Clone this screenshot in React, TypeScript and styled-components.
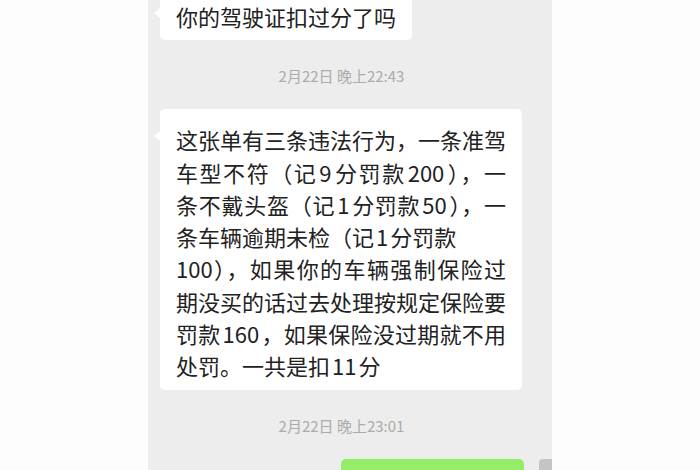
import React from "react";
import styled, { createGlobalStyle } from "styled-components";

const GlobalStyle = createGlobalStyle`
  html, body {
    margin: 0;
    padding: 0;
    background: #fdfdfd;
  }
  body {
    font-family: "Noto Sans CJK SC", "Noto Sans", sans-serif;
  }
`;

const Page = styled.div`
  width: 700px;
  height: 470px;
  display: flex;
  justify-content: center;
  background: #fdfdfd;
`;

const Panel = styled.main`
  width: 404px;
  height: 470px;
  background: #ededed;
  overflow: hidden;
`;

const Thread = styled.div`
  display: flex;
  flex-direction: column;
  margin-top: -14px;
  padding: 0 12px;
`;

const Row = styled.div<{ $out?: boolean }>`
  display: flex;
  justify-content: ${(p) => (p.$out ? "flex-end" : "flex-start")};
  align-items: flex-start;
  gap: 15px;
  margin-right: ${(p) => (p.$out ? "-39px" : "0")};
`;

const Bubble = styled.div<{ $out?: boolean; $width?: number }>`
  position: relative;
  box-sizing: border-box;
  width: ${(p) => (p.$width ? `${p.$width}px` : "auto")};
  min-height: 54px;
  background: ${(p) => (p.$out ? "#95ec69" : "#ffffff")};
  color: #222222;
  border-radius: 5px;
  padding: 14px 16px 8px;
  font-size: 22px;
  line-height: 32.3px;
  &::before {
    content: "";
    position: absolute;
    top: 22px;
    ${(p) => (p.$out ? "right: -6px;" : "left: -6px;")}
    border-top: 5px solid transparent;
    border-bottom: 5px solid transparent;
    ${(p) =>
      p.$out
        ? "border-left: 6px solid #95ec69;"
        : "border-right: 6px solid #ffffff;"}
  }
`;

const Line = styled.div<{ $justify?: boolean }>`
  white-space: nowrap;
  text-align: left;
  text-align-last: ${(p) => (p.$justify ? "justify" : "auto")};
  text-justify: inter-character;
`;

const Num = styled.span`
  margin: 0 2px;
`;

const Time = styled.div`
  text-align: center;
  font-size: 15px;
  line-height: 20px;
  color: #ababab;
  padding: 26px 17px 23px 0;
`;

const Avatar = styled.div`
  width: 40px;
  height: 40px;
  flex-shrink: 0;
  border-radius: 4px;
  background: #c4c4c4;
`;

const App = () => {
  return (
    <Page>
      <GlobalStyle />
      <Panel>
        <Thread>
          <Row>
            <Bubble>
              <Line>你的驾驶证扣过分了吗</Line>
            </Bubble>
          </Row>
          <Time>2月22日 晚上22:43</Time>
          <Row>
            <Bubble $width={362}>
              <Line $justify>这张单有三条违法行为，一条准驾</Line>
              <Line $justify>
                车型不符（记<Num>9</Num>分罚款<Num>200</Num>），一
              </Line>
              <Line $justify>
                条不戴头盔（记<Num>1</Num>分罚款<Num>50</Num>），一
              </Line>
              <Line>
                条车辆逾期未检（记<Num>1</Num>分罚款
              </Line>
              <Line $justify>100），如果你的车辆强制保险过</Line>
              <Line $justify>期没买的话过去处理按规定保险要</Line>
              <Line $justify>
                罚款<Num>160</Num>，如果保险没过期就不用
              </Line>
              <Line>
                处罚。一共是扣<Num>11</Num>分
              </Line>
            </Bubble>
          </Row>
          <Time>2月22日 晚上23:01</Time>
          <Row $out>
            <Bubble $out $width={183} />
            <Avatar />
          </Row>
        </Thread>
      </Panel>
    </Page>
  );
};

export default App;
